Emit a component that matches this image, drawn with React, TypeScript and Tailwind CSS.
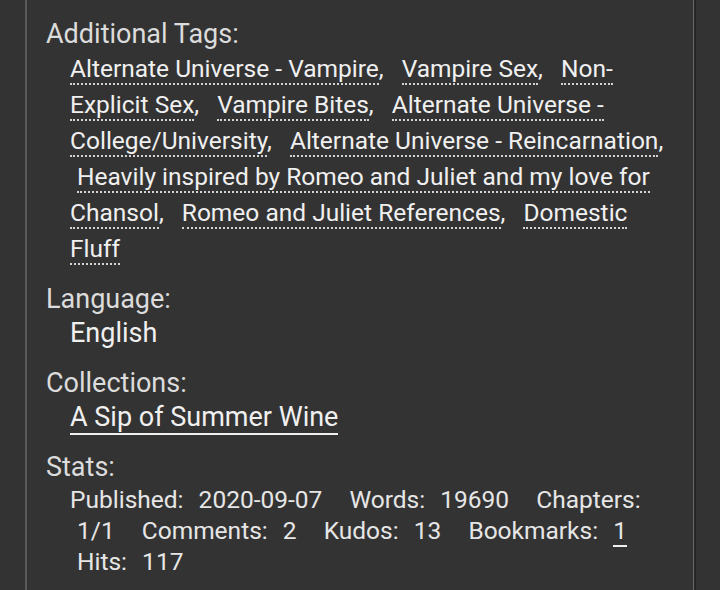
import React from "react";

const tags = [
  "Alternate Universe - Vampire",
  "Vampire Sex",
  "Non-Explicit Sex",
  "Vampire Bites",
  "Alternate Universe - College/University",
  "Alternate Universe - Reincarnation",
  "Heavily inspired by Romeo and Juliet and my love for Chansol",
  "Romeo and Juliet References",
  "Domestic Fluff",
];

const stats: [string, React.ReactNode][] = [
  ["Published:", "2020-09-07"],
  ["Words:", "19690"],
  ["Chapters:", "1/1"],
  ["Comments:", "2"],
  ["Kudos:", "13"],
  ["Bookmarks:", <a className="border-b-2 border-[#eee]">1</a>],
  ["Hits:", "117"],
];

export default function App() {
  return (
    <div className="min-h-[590px] bg-[#333] pl-[25px] font-['Roboto',sans-serif]">
      <div className="h-[590px] w-[669px] overflow-hidden border-l-2 border-r border-l-[#5a5a5a] border-r-[#6a6a6a] bg-[#333] pl-[19px] pr-[20px] pt-[17px] text-[27px] leading-[34px] text-[#dcdcdc] shadow-[2px_0_0_#262626]">
        <dl>
          <dt>Additional Tags:</dt>
          <dd className="pl-6 text-[24.5px] leading-[36px] text-[#f0f0f0]">
            <ul className="inline">
              {tags.map((t, i) => (
                <React.Fragment key={i}>
                  <li className={i === 0 ? "inline" : "ml-[7px] inline"}>
                    <a className="border-b-2 border-dotted border-[#d4d4d4]">{t}</a>
                    {i < tags.length - 1 && <span className="mr-[5px]">,</span>}
                  </li>{" "}
                </React.Fragment>
              ))}
            </ul>
          </dd>

          <dt className="mt-[15px]">Language:</dt>
          <dd className="pl-6 text-[#f0f0f0]">English</dd>

          <dt className="mt-[16px]">Collections:</dt>
          <dd className="pl-6 text-[#f0f0f0]">
            <a className="border-b-2 border-[#f0f0f0]">A Sip of Summer Wine</a>
          </dd>

          <dt className="mt-[16px]">Stats:</dt>
          <dd className="pl-6 text-[24.5px] leading-[31px] text-[#e6e6e6]">
            {stats.map(([k, v], i) => (
              <React.Fragment key={i}>
                <span className={i === 0 ? "mr-[2px]" : "ml-[7px] mr-[2px]"}>{k}</span>{" "}
                <span className="ml-[7px] mr-[14px]">{v}</span>{" "}
              </React.Fragment>
            ))}
          </dd>
        </dl>
      </div>
    </div>
  );
}
